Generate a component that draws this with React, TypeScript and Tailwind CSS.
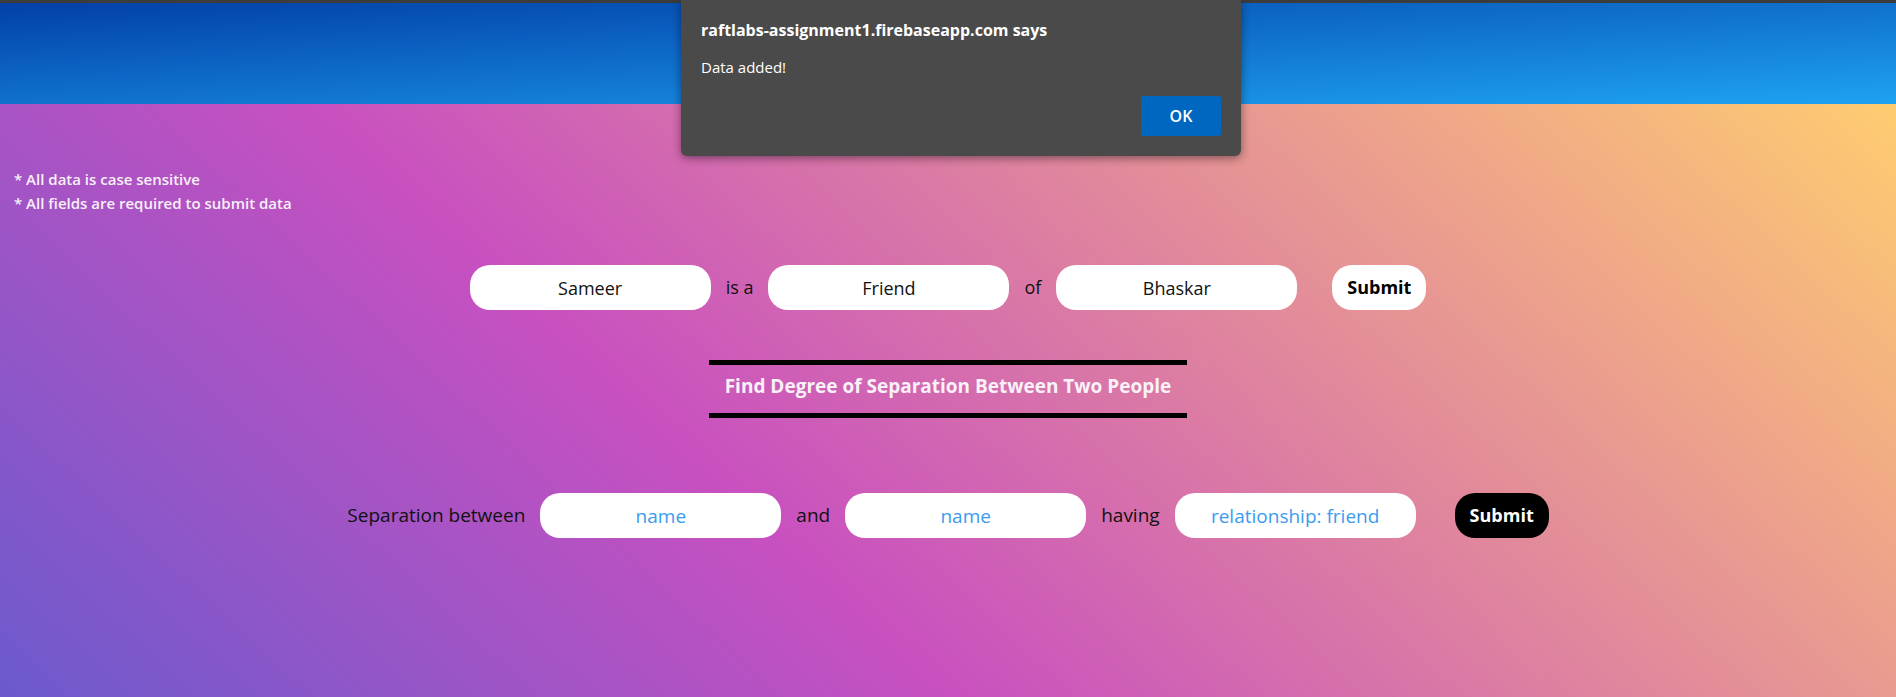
import { useState } from "react";

const FIELD =
  "h-[45px] w-[241px] rounded-[20px] bg-white text-center text-[18px] text-[#111] outline-none placeholder:text-[#3a9bef]";

export default function App() {
  const [shown, setShown] = useState(true);

  return (
    <div className="relative h-[697px] w-full overflow-hidden font-['Open_Sans',sans-serif]">
      <div className="h-[3px] bg-[#3c3c3c]" />
      <header className="h-[101px] bg-[linear-gradient(to_bottom_right,#0240a8,#1ea2f2)]" />

      <main className="h-[593px] bg-[linear-gradient(43deg,#6b5acd_0%,#c850c0_37.5%,#ffcc70_100%)] pt-[63px]">
        <div className="pl-[14px] text-[15px] font-semibold leading-[24px] text-[#f6f0f8]">
          <p>* All data is case sensitive</p>
          <p>* All fields are required to submit data</p>
        </div>

        {/* Add relation */}
        <form
          className="mt-[50px] flex items-center justify-center text-[18px] text-[#111]"
          onSubmit={(e) => e.preventDefault()}
        >
          <input className={FIELD} defaultValue="Sameer" />
          <span className="mx-[15px]">is a</span>
          <input className={FIELD} defaultValue="Friend" />
          <span className="mx-[15px]">of</span>
          <input className={FIELD} defaultValue="Bhaskar" />
          <button
            type="submit"
            className="ml-[35px] h-[45px] w-[94px] rounded-[20px] bg-white text-[18px] font-bold text-black"
          >
            Submit
          </button>
        </form>

        <div className="mt-[50px] flex justify-center">
          <h2 className="w-[478px] border-y-[5px] border-black pb-[15px] pt-[9px] text-center text-[19px] font-bold leading-[24px] text-[#f8f2f8]">
            Find Degree of Separation Between Two People
          </h2>
        </div>

        {/* Search */}
        <form
          className="mt-[75px] flex items-center justify-center text-[19px] text-[#111]"
          onSubmit={(e) => e.preventDefault()}
        >
          <span className="mr-[15px]">Separation between</span>
          <input className={`${FIELD} text-[19px] font-medium`} placeholder="name" />
          <span className="mx-[15px]">and</span>
          <input className={`${FIELD} text-[19px] font-medium`} placeholder="name" />
          <span className="mx-[15px]">having</span>
          <input className={`${FIELD} text-[19px] font-medium`} placeholder="relationship: friend" />
          <button
            type="submit"
            className="ml-[39px] h-[45px] w-[94px] rounded-[20px] bg-black text-[18px] font-bold text-white"
          >
            Submit
          </button>
        </form>
      </main>

      {shown && (
        <div className="absolute left-[681px] top-0 h-[156px] w-[560px] rounded-b-[6px] bg-[#4a4a4a] px-[20px] pt-[19px] shadow-[0_2px_10px_rgba(0,0,0,0.45)]">
          <p className="text-[16px] font-bold leading-[22px] text-white">
            raftlabs-assignment1.firebaseapp.com says
          </p>
          <p className="mt-[16px] text-[15px] leading-[20px] text-white">Data added!</p>
          <div className="mt-[19px] flex justify-end">
            <button
              onClick={() => setShown(false)}
              className="h-[40px] w-[80px] rounded-[3px] bg-[#0067c0] text-[16px] font-semibold text-white"
            >
              OK
            </button>
          </div>
        </div>
      )}
    </div>
  );
}
